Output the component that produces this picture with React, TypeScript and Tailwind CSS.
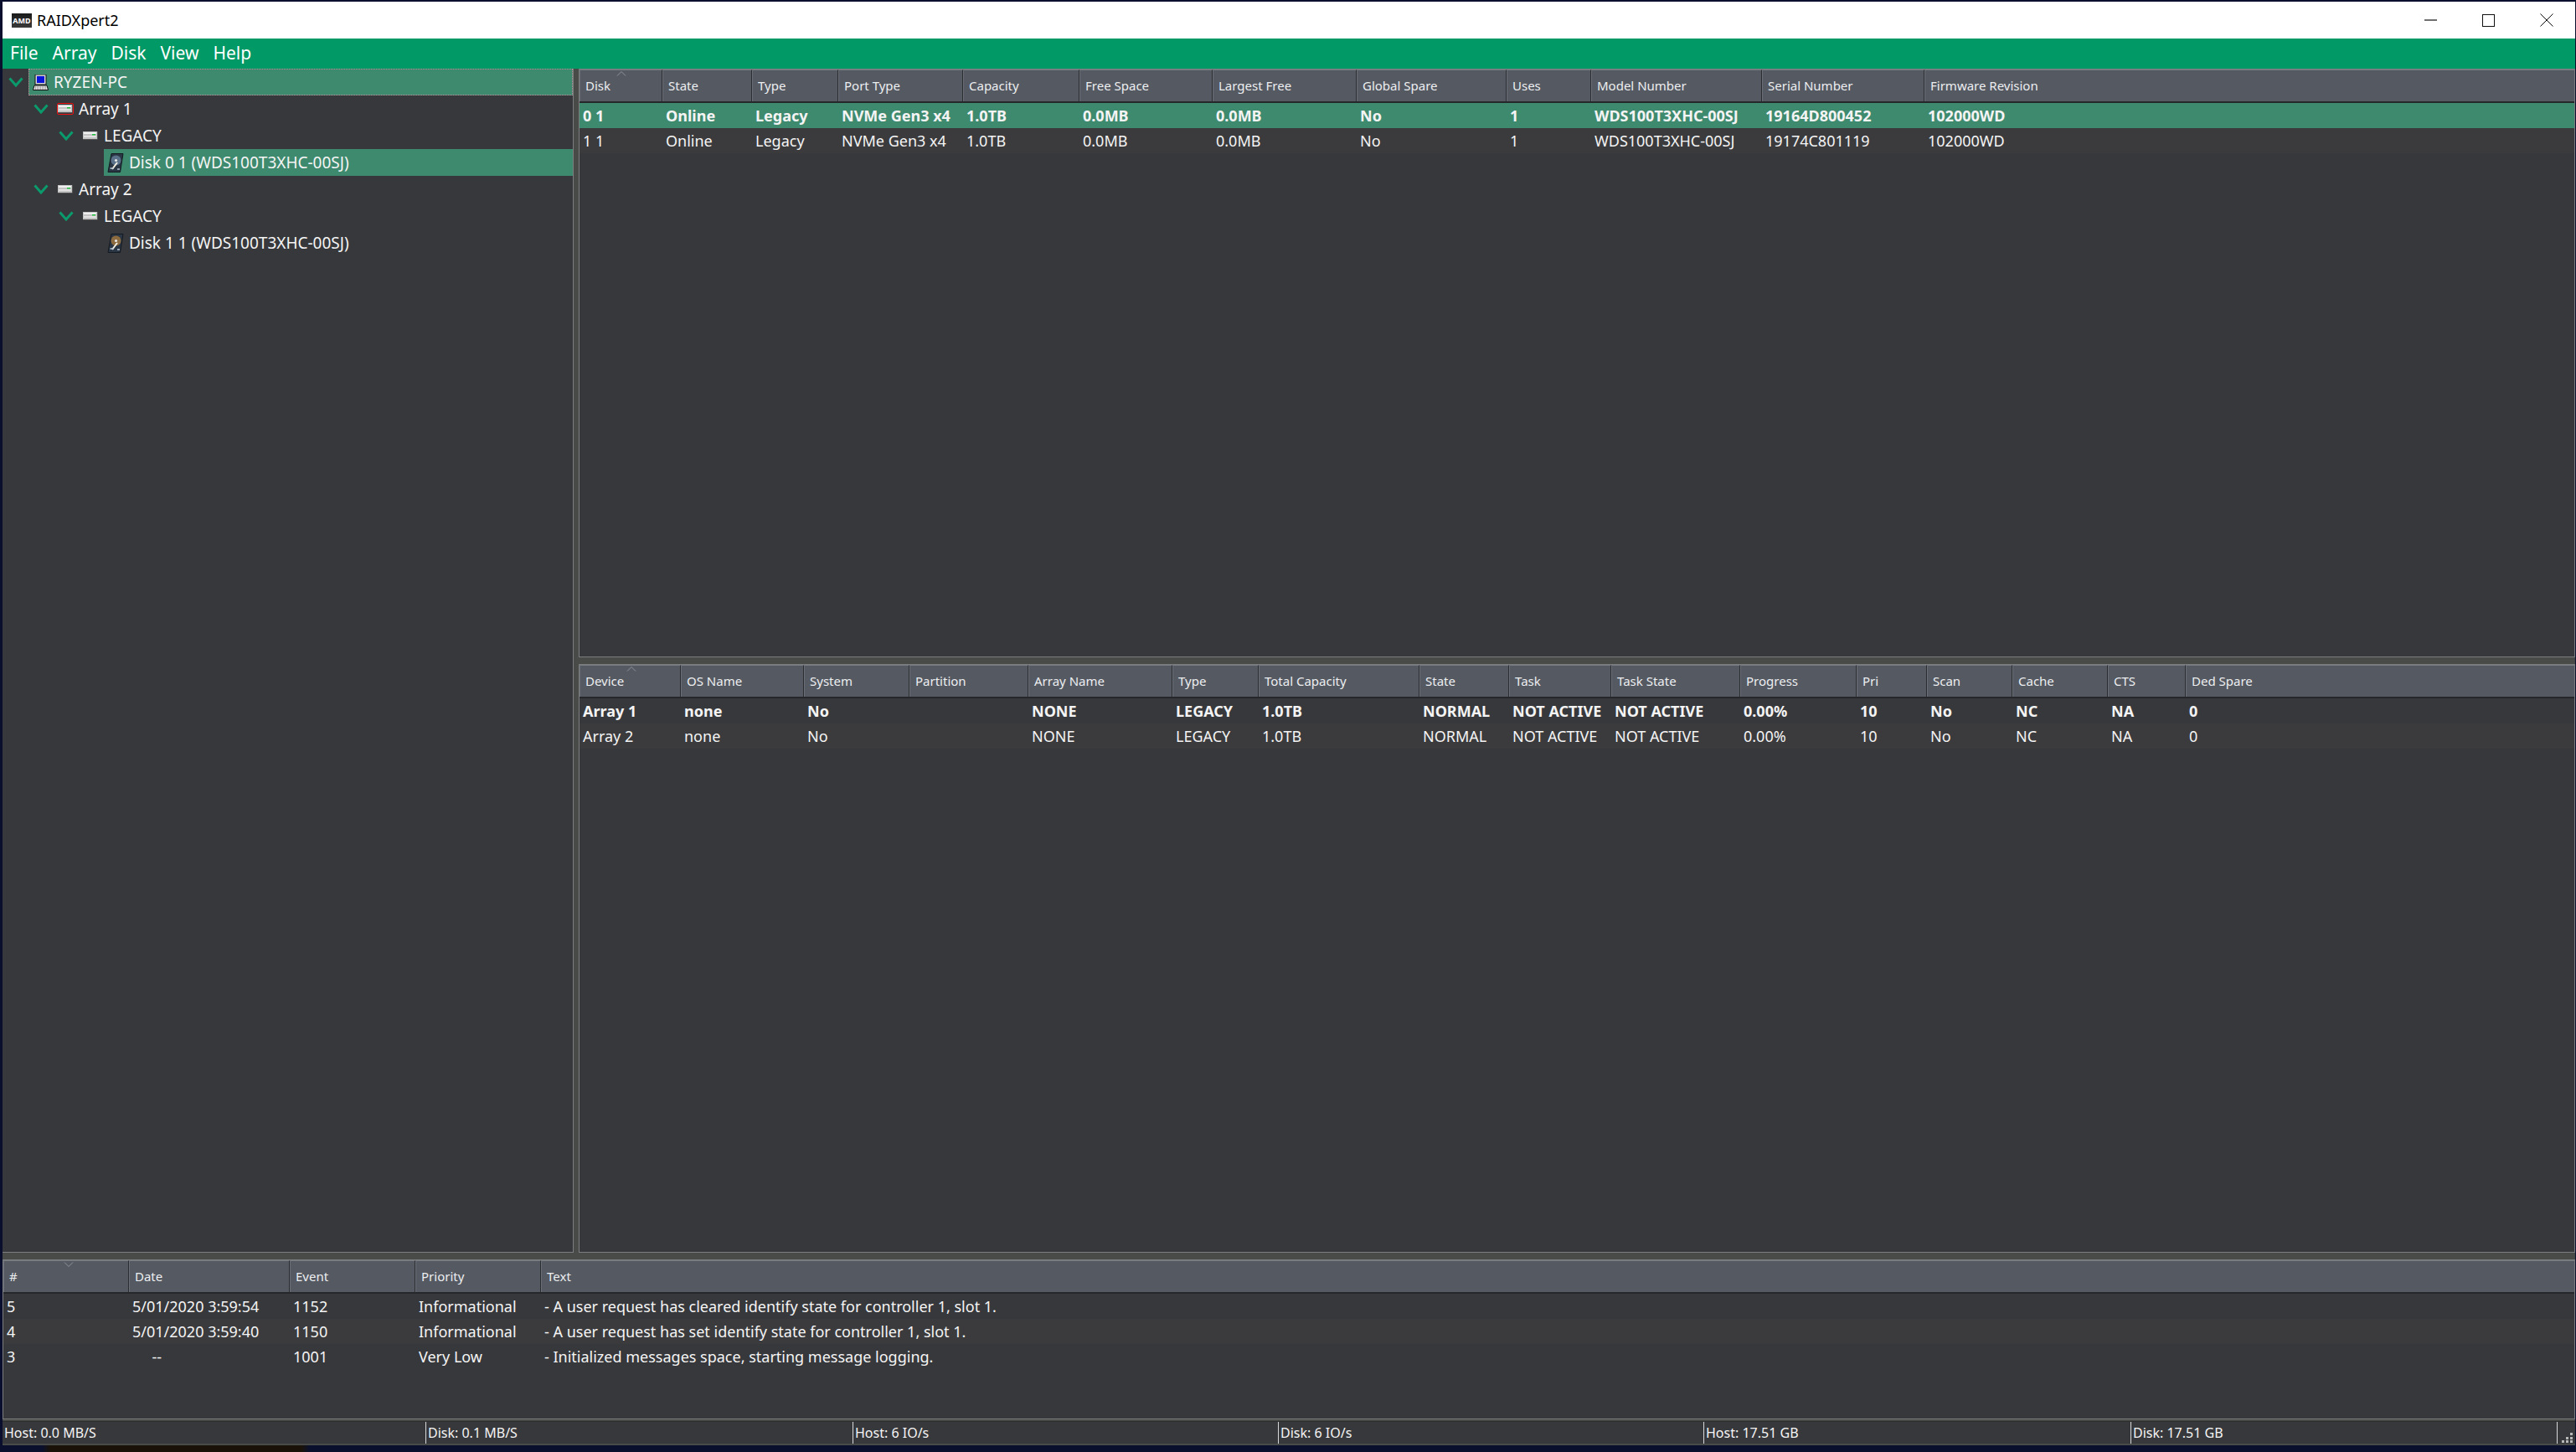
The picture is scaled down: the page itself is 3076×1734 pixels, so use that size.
import { FC } from "react";

const FONT = "font-['Noto_Sans','Open_Sans',sans-serif]";

type Col = { label: string; width?: number };

const diskCols: Col[] = [
  { label: "Disk", width: 99 },
  { label: "State", width: 107 },
  { label: "Type", width: 103 },
  { label: "Port Type", width: 149 },
  { label: "Capacity", width: 139 },
  { label: "Free Space", width: 159 },
  { label: "Largest Free", width: 172 },
  { label: "Global Spare", width: 179 },
  { label: "Uses", width: 101 },
  { label: "Model Number", width: 204 },
  { label: "Serial Number", width: 194 },
  { label: "Firmware Revision" },
];

const arrayCols: Col[] = [
  { label: "Device", width: 121 },
  { label: "OS Name", width: 147 },
  { label: "System", width: 126 },
  { label: "Partition", width: 142 },
  { label: "Array Name", width: 172 },
  { label: "Type", width: 103 },
  { label: "Total Capacity", width: 192 },
  { label: "State", width: 107 },
  { label: "Task", width: 122 },
  { label: "Task State", width: 154 },
  { label: "Progress", width: 139 },
  { label: "Pri", width: 84 },
  { label: "Scan", width: 102 },
  { label: "Cache", width: 114 },
  { label: "CTS", width: 93 },
  { label: "Ded Spare" },
];

const logCols: Col[] = [
  { label: "#", width: 150 },
  { label: "Date", width: 192 },
  { label: "Event", width: 150 },
  { label: "Priority", width: 150 },
  { label: "Text" },
];

const Chevron = () => (
  <svg width="18" height="12" viewBox="0 0 18 12" className="shrink-0">
    <path d="M1.5 1.5 L9 10 L16.5 1.5" fill="none" stroke="#0b9a6c" strokeWidth="3" />
  </svg>
);

const ComputerIcon = () => (
  <svg width="19" height="19" viewBox="0 0 19 19" className="shrink-0">
    <rect x="3" y="0" width="13" height="12" fill="#d8d8d8" stroke="#111" />
    <rect x="5" y="2" width="9" height="8" fill="#0a14d8" />
    <path d="M2 13 H17 L18.5 18.5 H0.5 Z" fill="#e4e4e4" stroke="#111" />
    <path d="M3 15 H16 M3 17 H16" stroke="#666" strokeDasharray="1 1" />
  </svg>
);

const DriveIcon = ({ alert }: { alert?: boolean }) => (
  <span className={`flex shrink-0 items-center justify-center w-[20px] h-[14px] rounded-[2px] ${alert ? "border border-[#f01010]" : ""}`}>
    <svg width="18" height="10" viewBox="0 0 18 10">
      <rect x="0" y="0" width="17" height="9" fill="#c4c4c4" />
      <rect x="1" y="1" width="15" height="2" fill="#f0f0f0" />
      <rect x="1" y="5" width="15" height="2" fill="#e2e2e2" />
      <rect x="11" y="3" width="4" height="1.5" fill="#22c040" />
      <path d="M0 9.5 H17.5 V0" fill="none" stroke="#555" />
    </svg>
  </span>
);

const DiskIcon = ({ platter }: { platter: string }) => (
  <svg width="20" height="23" viewBox="0 0 20 23" className="shrink-0">
    <path d="M5 0.5 H19 L15.5 22.5 H1 Z" fill="#2a3644" stroke="#141a22" />
    <circle cx="10.5" cy="8.5" r="6" fill={platter} />
    <circle cx="10.5" cy="8.5" r="1.6" fill="#e6e6e6" />
    <path d="M6 19 L12 11" stroke="#f2efe0" strokeWidth="2" />
    <path d="M3.5 18 H8 M12 19 H15" stroke="#b8c4d0" strokeWidth="1.5" />
  </svg>
);

const TreeRow = ({
  indent,
  icon,
  label,
  chevron,
  selected,
  focused,
}: {
  indent: string;
  icon: React.ReactNode;
  label: string;
  chevron?: boolean;
  selected?: boolean;
  focused?: boolean;
}) => (
  <div className={`flex h-[32px] items-center ${indent}`}>
    <span className="w-[24px] shrink-0 pl-[0px]">{chevron && <Chevron />}</span>
    <div
      className={`flex h-[32px] flex-1 items-center gap-[6px] pl-[4px] ${selected ? "bg-[#3e8a6e]" : ""} ${
        focused ? "border border-dotted border-[#c58a9a]" : ""
      }`}
    >
      {icon}
      <span className="whitespace-nowrap text-[19px] text-[#f4f4f4]">{label}</span>
    </div>
  </div>
);

const Caret = ({ down, left }: { down?: boolean; left: string }) => (
  <svg width="12" height="6" viewBox="0 0 12 6" className={`absolute top-[2px] ${left}`}>
    <path d={down ? "M1 0.5 L6 5.5 L11 0.5" : "M1 5.5 L6 0.5 L11 5.5"} fill="none" stroke="#8e929a" />
  </svg>
);

const Header = ({ cols, caret }: { cols: Col[]; caret: React.ReactNode }) => (
  <div className="relative flex h-[40px] shrink-0 border-b-2 border-[#26272a] bg-[#555962]">
    {caret}
    {cols.map((c) => (
      <div
        key={c.label}
        style={c.width ? { width: c.width } : undefined}
        className={`flex items-center border-t border-l border-t-[#777b82] border-l-[#6a6e76] pl-[6px] text-[15px] text-[#eceef0] ${
          c.width ? "shrink-0 border-r border-r-[#2c2d30]" : "flex-1"
        }`}
      >
        {c.label}
      </div>
    ))}
  </div>
);

const Row = ({
  cols,
  cells,
  className,
}: {
  cols: Col[];
  cells: string[];
  className: string;
}) => (
  <div className={`flex h-[30px] shrink-0 items-center text-[18px] text-[#f4f4f4] ${className}`}>
    {cols.map((c, i) => (
      <div
        key={c.label}
        style={c.width ? { width: c.width } : undefined}
        className={`whitespace-pre pl-[4px] ${c.width ? "shrink-0" : "flex-1"}`}
      >
        {cells[i]}
      </div>
    ))}
  </div>
);

const Pane = ({ className, children }: { className: string; children: React.ReactNode }) => (
  <div className={`flex flex-col overflow-hidden border border-[#7b7d7f] bg-[#37383b] ${className}`}>{children}</div>
);

const StatusCell = ({ text, width }: { text: string; width: string }) => (
  <div className={`flex h-full shrink-0 items-center border-r border-[#d8d8d8] pl-[2px] text-[16px] text-[#f4f4f4] ${width}`}>
    {text}
  </div>
);

const Grip = () => (
  <svg width="14" height="14" viewBox="0 0 14 14" className="absolute right-[2px] bottom-[1px]">
    <path d="M10 2h3v3h-3zM5 7h3v3H5zM10 7h3v3h-3zM0 11h3v3H0zM5 11h3v3H5zM10 11h3v3h-3z" fill="#b8b8b8" />
  </svg>
);

export default function App() {
  return (
    <div className={`flex h-[1734px] w-[3076px] flex-col overflow-hidden bg-[#0a0f2e] pt-[2px] pl-[3px] pr-[1px] ${FONT}`}>
      {/* Title bar */}
      <div className="flex h-[44px] shrink-0 items-center bg-white">
        <div className="ml-[11px] flex h-[17px] w-[24px] items-center justify-center bg-[linear-gradient(#1a1a1a,#3a3a3a)] text-[9px] font-bold leading-none text-white">
          AMD
        </div>
        <span className="ml-[6px] text-[18px] text-black">RAIDXpert2</span>
        <div className="ml-auto flex items-center">
          <button className="flex h-[44px] w-[69px] items-center justify-center">
            <svg width="15" height="2" viewBox="0 0 15 2">
              <path d="M0 1 H15" stroke="#111" strokeWidth="1.2" />
            </svg>
          </button>
          <button className="flex h-[44px] w-[69px] items-center justify-center">
            <svg width="15" height="15" viewBox="0 0 15 15">
              <rect x="0.5" y="0.5" width="14" height="14" fill="none" stroke="#111" />
            </svg>
          </button>
          <button className="flex h-[44px] w-[69px] items-center justify-center">
            <svg width="16" height="16" viewBox="0 0 16 16">
              <path d="M0.5 0.5 L15.5 15.5 M15.5 0.5 L0.5 15.5" stroke="#111" />
            </svg>
          </button>
        </div>
      </div>

      {/* Menu */}
      <div className="flex h-[36px] shrink-0 items-center gap-[17px] bg-[#019966] pl-[9px] text-[21px] text-white">
        <span>File</span>
        <span>Array</span>
        <span>Disk</span>
        <span>View</span>
        <span>Help</span>
      </div>

      {/* Body */}
      <div className="flex flex-1 flex-col bg-[#484b48]">
        <div className="flex h-[1414px] shrink-0 gap-[6px]">
          <div className="flex w-[682px] shrink-0 flex-col border-r border-b border-[#7b7d7f] bg-[#37383b]">
            <TreeRow indent="pl-[7px]" chevron icon={<ComputerIcon />} label="RYZEN-PC" selected focused />
            <TreeRow indent="pl-[37px]" chevron icon={<DriveIcon alert />} label="Array 1" />
            <TreeRow indent="pl-[67px]" chevron icon={<DriveIcon />} label="LEGACY" />
            <TreeRow indent="pl-[97px]" icon={<DiskIcon platter="#5a6f88" />} label="Disk 0 1 (WDS100T3XHC-00SJ)" selected />
            <TreeRow indent="pl-[37px]" chevron icon={<DriveIcon />} label="Array 2" />
            <TreeRow indent="pl-[67px]" chevron icon={<DriveIcon />} label="LEGACY" />
            <TreeRow indent="pl-[97px]" icon={<DiskIcon platter="#8a6a3e" />} label="Disk 1 1 (WDS100T3XHC-00SJ)" />
          </div>
          <div className="flex flex-1 flex-col gap-[8px]">
            <Pane className="h-[703px] shrink-0">
              <Header cols={diskCols} caret={<Caret left="left-[44px]" />} />
              <Row
                cols={diskCols}
                className="bg-[#3e8a6e] font-bold"
                cells={["0 1", "Online", "Legacy", "NVMe Gen3 x4", "1.0TB", "0.0MB", "0.0MB", "No", "1", "WDS100T3XHC-00SJ", "19164D800452", "102000WD"]}
              />
              <Row
                cols={diskCols}
                className="bg-[#3b3b3d]"
                cells={["1 1", "Online", "Legacy", "NVMe Gen3 x4", "1.0TB", "0.0MB", "0.0MB", "No", "1", "WDS100T3XHC-00SJ", "19174C801119", "102000WD"]}
              />
            </Pane>
            <Pane className="flex-1">
              <Header cols={arrayCols} caret={<Caret left="left-[56px]" />} />
              <Row
                cols={arrayCols}
                className="font-bold"
                cells={["Array 1", "none", "No", "", "NONE", "LEGACY", "1.0TB", "NORMAL", "NOT ACTIVE", "NOT ACTIVE", "0.00%", "10", "No", "NC", "NA", "0"]}
              />
              <Row
                cols={arrayCols}
                className="bg-[#3b3b3d]"
                cells={["Array 2", "none", "No", "", "NONE", "LEGACY", "1.0TB", "NORMAL", "NOT ACTIVE", "NOT ACTIVE", "0.00%", "10", "No", "NC", "NA", "0"]}
              />
            </Pane>
          </div>
        </div>

        {/* Log */}
        <Pane className="mt-[8px] h-[191px] shrink-0">
          <Header cols={logCols} caret={<Caret down left="left-[72px]" />} />
          <Row
            cols={logCols}
            cells={["5", "5/01/2020 3:59:54", "1152", "Informational", "- A user request has cleared identify state for controller 1, slot 1."]}
          />
          <Row
            cols={logCols}
            className="bg-[#3b3b3d]"
            cells={["4", "5/01/2020 3:59:40", "1150", "Informational", "- A user request has set identify state for controller 1, slot 1."]}
          />
          <Row
            cols={logCols}
            cells={["3", "     --", "1001", "Very Low", "- Initialized messages space, starting message logging."]}
          />
        </Pane>

        {/* Status bar */}
        <div className="relative mt-[2px] flex h-[27px] shrink-0 items-stretch border-t border-[#2b2c2e] bg-[#37383b]">
          <StatusCell text="Host: 0.0 MB/S" width="w-[506px]" />
          <StatusCell text="Disk: 0.1 MB/S" width="w-[510px]" />
          <StatusCell text="Host: 6 IO/s" width="w-[508px]" />
          <StatusCell text="Disk: 6 IO/s" width="w-[508px]" />
          <StatusCell text="Host: 17.51 GB" width="w-[510px]" />
          <StatusCell text="Disk: 17.51 GB" width="w-[509px]" />
          <Grip />
        </div>
      </div>

      <div className="-ml-[3px] -mr-[1px] h-[8px] shrink-0 bg-[linear-gradient(90deg,#0a0f2e_0,#0a0f2e_50px,#1a1208_60px,#1a1208_360px,#0a0f2e_370px)]" />
    </div>
  );
}
